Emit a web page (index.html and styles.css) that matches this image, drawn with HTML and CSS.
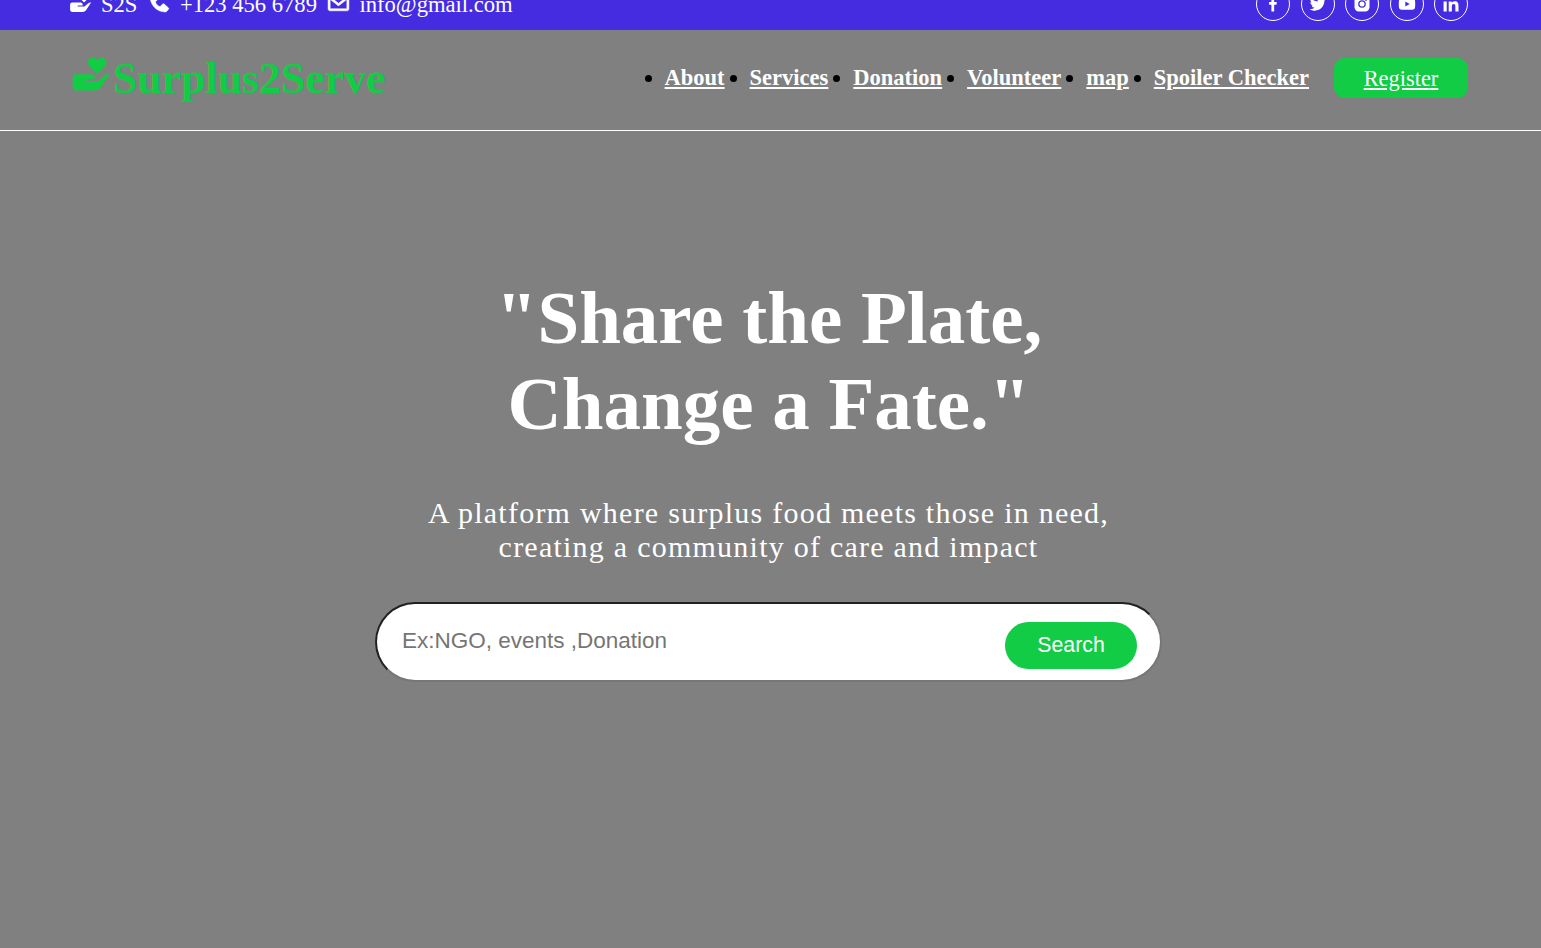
FILE: index.html
```html
<!DOCTYPE html>
<html lang="en">
<head>
  <meta charset="UTF-8">
  <title>Surplus2Serve</title>
  <meta name="viewport" content="width=device-width,initial-scale=1.0">
  <link rel="stylesheet" href="styles.css">
</head>
<body>

  <div class="topbar">
    <div class="contact">
      <p><svg class="icon" viewBox="0 0 24 24"><use href="#donate"/></svg><span>S2S</span></p>
      <p><svg class="icon" viewBox="0 0 24 24"><path stroke="currentColor" stroke-width=".6" d="m20.487 17.14-4.065-3.696a1.001 1.001 0 0 0-1.391.043l-2.393 2.461c-.576-.11-1.734-.471-2.926-1.66-1.192-1.193-1.553-2.354-1.66-2.926l2.459-2.394a1 1 0 0 0 .043-1.391L6.859 3.513a1 1 0 0 0-1.391-.087l-2.17 1.861a1 1 0 0 0-.29.649c-.015.25-.301 6.172 4.291 10.766C11.305 20.707 16.323 21 17.705 21c.202 0 .326-.006.359-.008a.992.992 0 0 0 .648-.291l1.86-2.171a.997.997 0 0 0-.085-1.39z"/></svg><span>+123 456 6789</span></p>
      <p><svg class="icon" viewBox="0 0 24 24"><path stroke="currentColor" stroke-width=".5" d="M20 4H4c-1.103 0-2 .897-2 2v12c0 1.103.897 2 2 2h16c1.103 0 2-.897 2-2V6c0-1.103-.897-2-2-2zm0 2v.511l-8 6.223-8-6.222V6h16zM4 18V9.044l7.386 5.745a.994.994 0 0 0 1.228 0L20 9.044 20.002 18H4z"/></svg><span>info@gmail.com</span></p>
    </div>
    <div class="social">
      <a href="#"><svg viewBox="0 0 24 24"><path d="M13.397 20.997v-8.196h2.765l.411-3.209h-3.176V7.548c0-.926.258-1.56 1.587-1.56h1.684V3.127A22.336 22.336 0 0 0 14.201 3c-2.444 0-4.122 1.492-4.122 4.231v2.355H7.332v3.209h2.753v8.202h3.312z"/></svg></a>
      <a href="#"><svg viewBox="0 0 24 24"><path d="M19.633 7.997c.013.175.013.349.013.523 0 5.325-4.053 11.461-11.46 11.461-2.282 0-4.402-.661-6.186-1.809.324.037.636.05.973.05a8.07 8.07 0 0 0 5.001-1.721 4.036 4.036 0 0 1-3.767-2.793c.249.037.499.062.761.062.361 0 .724-.05 1.061-.137a4.027 4.027 0 0 1-3.23-3.953v-.05c.537.299 1.16.486 1.82.511a4.022 4.022 0 0 1-1.796-3.354c0-.748.199-1.434.548-2.032a11.457 11.457 0 0 0 8.306 4.215c-.062-.3-.1-.611-.1-.923a4.026 4.026 0 0 1 4.028-4.028c1.16 0 2.207.486 2.943 1.272a7.957 7.957 0 0 0 2.556-.973 4.02 4.02 0 0 1-1.771 2.22 8.073 8.073 0 0 0 2.319-.624 8.645 8.645 0 0 1-2.019 2.083z"/></svg></a>
      <a href="#"><svg viewBox="0 0 24 24"><path fill-rule="evenodd" d="M8 3h8a5 5 0 0 1 5 5v8a5 5 0 0 1-5 5H8a5 5 0 0 1-5-5V8a5 5 0 0 1 5-5zM12 7.4a4.6 4.6 0 1 0 0 9.2 4.6 4.6 0 0 0 0-9.2zM16.8 6.1a1.1 1.1 0 1 0 0 2.2 1.1 1.1 0 0 0 0-2.2z"/><circle cx="12" cy="12" r="3"/></svg></a>
      <a href="#"><svg viewBox="0 0 24 24"><path fill-rule="evenodd" d="M12 5c-2.5 0-6.3.2-7.5.5A2.5 2.5 0 0 0 2.5 7.3C2 9 2 15 2.5 16.8a2.5 2.5 0 0 0 1.9 1.8c1.8.5 13.4.5 15.2 0a2.5 2.5 0 0 0 1.9-1.8c.5-1.8.5-7.7 0-9.5a2.5 2.5 0 0 0-2-1.8C18.3 5.2 14.5 5 12 5zM10 9v6l5.2-3z"/></svg></a>
      <a href="#"><svg viewBox="0 0 24 24"><circle cx="4.983" cy="5.009" r="2.188"/><path d="M9.237 8.855v12.139h3.769v-6.003c0-1.584.298-3.118 2.262-3.118 1.937 0 1.961 1.811 1.961 3.218v5.904H21v-6.657c0-3.27-.704-5.783-4.526-5.783-1.835 0-3.065 1.007-3.568 1.96h-.051v-1.66H9.237zm-6.142 0H6.87v12.139H3.095z"/></svg></a>
    </div>
  </div>

  <header>
    <h1 class="logo">
      <svg viewBox="0 0 24 24">
        <g id="donate">
          <path d="M15.4 12l4.3-4.4c1.1-1.1 1-2.8 0-3.8a2.6 2.6 0 0 0-3.7 0l-.6.6-.6-.6a2.6 2.6 0 0 0-3.7 0c-1 1-1.1 2.7 0 3.8z"/>
          <path d="M4 12.100h8a1.900 1.900 0 0 1 1.900 2.700H9.300v1h6.500l4-3.300a2 2 0 0 1 1.200-.4h1.200l-4.900 7.300A4 4 0 0 1 14 21H4a2 2 0 0 1-2-2v-4.900a2 2 0 0 1 2-2z"/>
        </g>
      </svg>Surplus2Serve
    </h1>
    <nav>
      <ul>
        <li><a href="#">About</a></li>
        <li><a href="#">Services</a></li>
        <li><a href="#">Donation</a></li>
        <li><a href="#">Volunteer</a></li>
        <li><a href="#">map</a></li>
        <li><a href="#">Spoiler Checker</a></li>
      </ul>
      <a class="register" href="#">Register</a>
    </nav>
  </header>

  <main class="hero">
    <h2>"Share the Plate,<br>Change a Fate."</h2>
    <p>A platform where surplus food meets those in need,<br>creating a community of care and impact</p>
    <form class="search">
      <input type="text" placeholder="Ex:NGO, events ,Donation">
      <button type="button">Search</button>
    </form>
  </main>

</body>
</html>
```
FILE: styles.css
```css
* {
  margin: 0;
  padding: 0;
  box-sizing: border-box;
}

body {
  background-color: #808080;
  font-family: "Liberation Serif", serif;
  font-size: 22.4px;
  color: white;
  height: 948px;
  overflow: hidden;
}

svg {
  fill: currentColor;
  display: block;
}

/* top bar */
.topbar {
  height: 52px;
  margin-top: -22px;
  padding: 0 73px 0 68px;
  background-color: #452ce0;
  display: flex;
  justify-content: space-between;
  align-items: center;
}

.contact {
  display: flex;
  gap: 9.5px;
  font-size: 22.6px;
}

.contact p {
  display: flex;
  align-items: center;
  gap: 8px;
}

.contact span {
  position: relative;
  top: 1px;
}

.icon {
  width: 25px;
  height: 25px;
  margin-top: -4px;
}

.social {
  display: flex;
  gap: 10.4px;
}

.social a {
  width: 34px;
  height: 34px;
  border: 1px solid white;
  border-radius: 50%;
  color: white;
  display: flex;
  align-items: center;
  justify-content: center;
}

.social svg {
  width: 20px;
  height: 20px;
}

/* header */
header {
  height: 101px;
  padding: 0 73px 5px 69px;
  border-bottom: 1px solid white;
  display: flex;
  justify-content: space-between;
  align-items: center;
}

.logo {
  display: flex;
  align-items: center;
  font-size: 43.8px;
  color: #12cc45;
}

.logo svg {
  width: 44px;
  height: 44px;
  margin-top: -8px;
}

nav {
  display: flex;
  align-items: center;
}

nav ul {
  display: flex;
}

nav li {
  margin-right: 25px;
  font-weight: bold;
  font-size: 22.5px;
}

nav li::marker {
  color: black;
}

nav a {
  color: white;
}

.register {
  width: 134px;
  height: 40px;
  border-radius: 11px;
  background-color: #12cc45;
  line-height: 41px;
  text-align: center;
}

/* hero */
.hero {
  padding-top: 144px;
  text-align: center;
}

.hero h2 {
  padding-right: 3px;
  font-size: 75px;
  line-height: 86px;
}

.hero p {
  margin: 49px 0 38px;
  padding-right: 4px;
  font-size: 30px;
  line-height: 34px;
  letter-spacing: 1.24px;
}

.search {
  position: relative;
  width: 787px;
  height: 80px;
  margin: 0 auto;
  left: -2px;
}

.search input {
  width: 100%;
  height: 100%;
  padding: 0 25px 2px;
  border: 2px inset #767676;
  border-radius: 40px;
  background-color: white;
  font-family: "Liberation Sans", sans-serif;
  font-size: 22.5px;
}

.search button {
  position: absolute;
  top: 20px;
  right: 25px;
  width: 132px;
  height: 47px;
  border: none;
  border-radius: 24px;
  background-color: #12cc45;
  color: white;
  font-family: "Liberation Sans", sans-serif;
  font-size: 21.3px;
}
```
